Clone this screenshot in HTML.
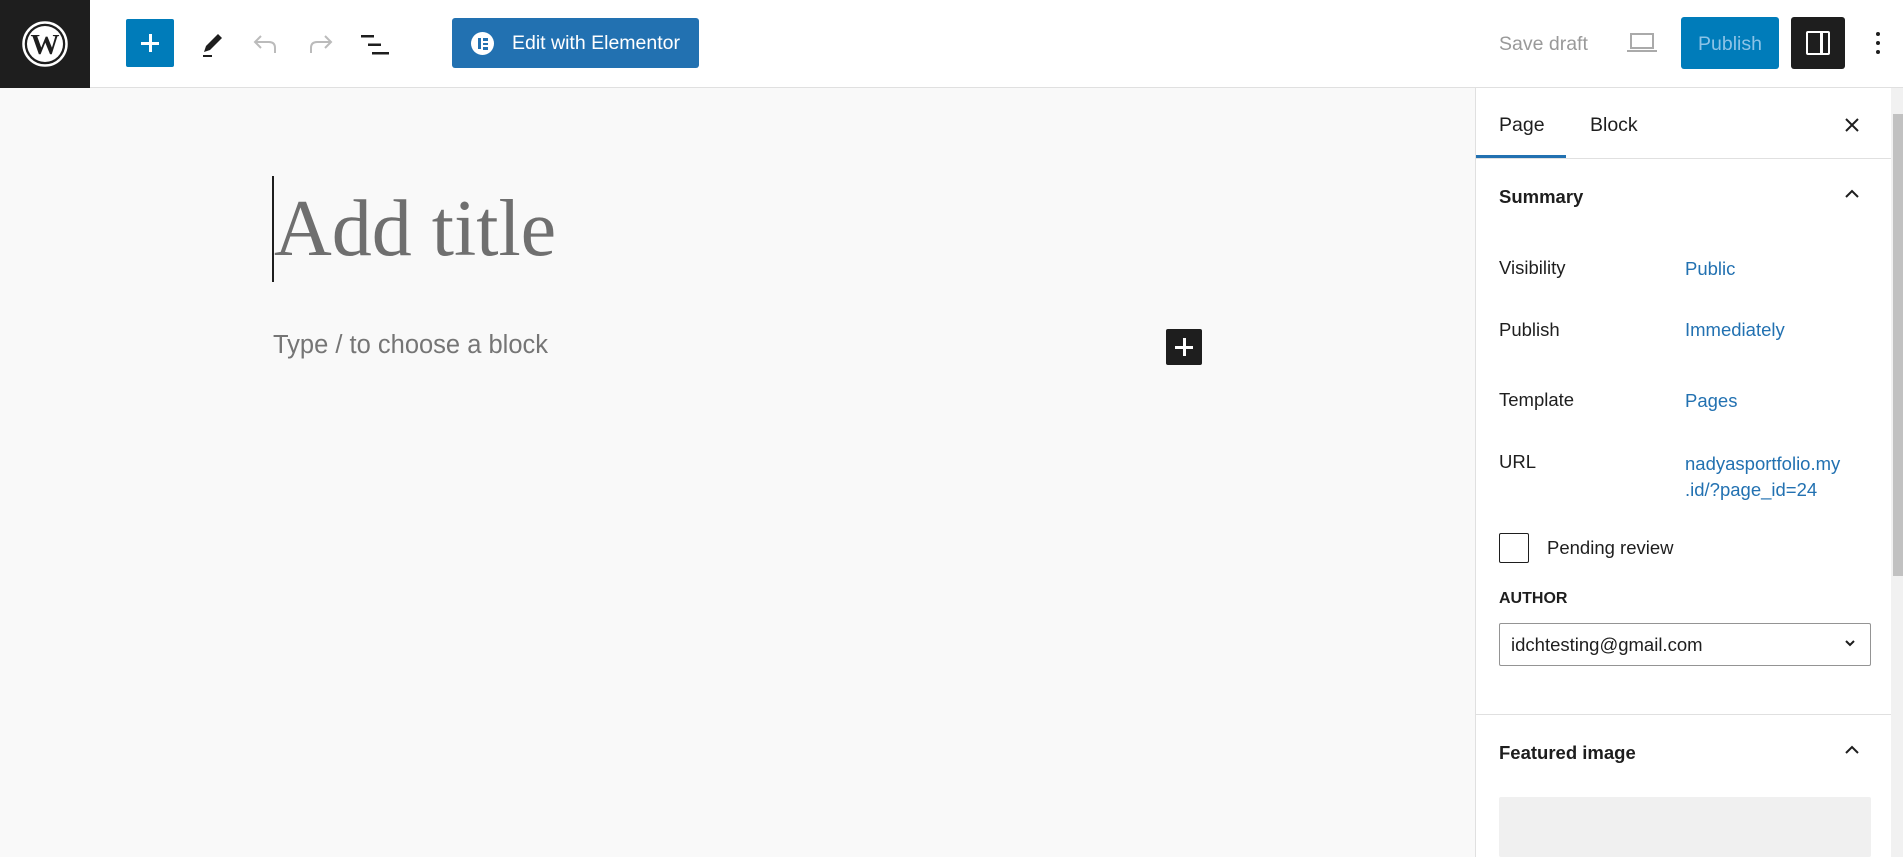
<!DOCTYPE html>
<html><head><meta charset="utf-8"><style>
*{box-sizing:border-box;margin:0;padding:0}
body{width:1903px;height:857px;overflow:hidden;background:#f9f9f9;font-family:"Liberation Sans",sans-serif;color:#1e1e1e;position:relative}
.a{position:absolute}
.hdr{left:0;top:0;width:1903px;height:88px;background:#fff;border-bottom:1px solid #e0e0e0}
.side{left:1475px;top:88px;width:428px;height:769px;background:#fff;border-left:1px solid #e0e0e0}
.t{font-size:18.5px;white-space:nowrap}
.lnk{color:#2271b1}
</style></head><body>
<div class="a hdr"></div>
<div class="a" style="left:0;top:0;width:90px;height:88px;background:#1e1e1e"></div>
<svg class="a" style="left:22px;top:21px" width="46" height="46" viewBox="0 0 46 46"><circle cx="23" cy="23" r="21.5" fill="none" stroke="#fff" stroke-width="2.5"/><circle cx="23" cy="23" r="18" fill="#fff"/><text x="23" y="33" text-anchor="middle" font-family="Liberation Serif" font-weight="bold" font-size="29" fill="#1e1e1e">W</text></svg>
<div class="a" style="left:126px;top:19px;width:48px;height:48px;background:#007cba;border-radius:2px"></div>
<div class="a" style="left:141px;top:42px;width:18px;height:2.5px;background:#fff"></div>
<div class="a" style="left:149px;top:34px;width:2.5px;height:18px;background:#fff"></div>
<svg class="a" style="left:200px;top:30px" width="26" height="30" viewBox="0 0 26 30"><path d="M4 22 L6 16 L18 4 L22 8 L10 20 Z" fill="#1e1e1e"/><rect x="3" y="25" width="9" height="2" fill="#1e1e1e"/></svg>
<svg class="a" style="left:252px;top:32px" width="28" height="24" viewBox="0 0 28 24"><path d="M9 4 L3 10 L9 16 M3 10 H17 Q23 10 23 16 V21" fill="none" stroke="#bbb" stroke-width="2"/></svg>
<svg class="a" style="left:306px;top:32px" width="28" height="24" viewBox="0 0 28 24"><path d="M19 4 L25 10 L19 16 M25 10 H11 Q5 10 5 16 V21" fill="none" stroke="#bbb" stroke-width="2"/></svg>
<svg class="a" style="left:360px;top:34px" width="30" height="22" viewBox="0 0 30 22"><rect x="1" y="1" width="13" height="2.5" fill="#1e1e1e"/><rect x="8" y="9.5" width="13" height="2.5" fill="#1e1e1e"/><rect x="12" y="18" width="17" height="2.5" fill="#1e1e1e"/></svg>
<div class="a" style="left:452px;top:18px;width:247px;height:50px;background:#2271b1;border-radius:3px"></div>
<div class="a" style="left:471px;top:32px;width:23px;height:23px;border-radius:50%;background:#fff"></div>
<div class="a" style="left:478px;top:38px;width:2.5px;height:11px;background:#2271b1"></div>
<div class="a" style="left:483px;top:38px;width:5px;height:2.5px;background:#2271b1"></div>
<div class="a" style="left:483px;top:42.5px;width:5px;height:2.5px;background:#2271b1"></div>
<div class="a" style="left:483px;top:47px;width:5px;height:2.5px;background:#2271b1"></div>
<div class="a t" style="left:512px;top:32px;color:#fff;font-size:19.5px">Edit with Elementor</div>
<div class="a t" style="left:1499px;top:33px;color:#999;font-size:19.5px">Save draft</div>
<svg class="a" style="left:1626px;top:32px" width="32" height="22" viewBox="0 0 32 22"><rect x="5" y="2" width="22" height="14" fill="none" stroke="#aaa" stroke-width="2"/><rect x="1" y="18" width="30" height="2" fill="#aaa"/></svg>
<div class="a" style="left:1681px;top:17px;width:98px;height:52px;background:#007cba;border-radius:3px"></div>
<div class="a t" style="left:1698px;top:33px;color:#8cc3e6;font-size:19.5px">Publish</div>
<div class="a" style="left:1791px;top:17px;width:54px;height:52px;background:#1e1e1e;border-radius:3px"></div>
<div class="a" style="left:1806px;top:31px;width:24px;height:24px;border:2px solid #fff;border-radius:2px"></div>
<div class="a" style="left:1820px;top:31px;width:2.5px;height:24px;background:#fff"></div>
<div class="a" style="left:1876px;top:32px;width:4px;height:4px;background:#1e1e1e;border-radius:50%"></div>
<div class="a" style="left:1876px;top:41px;width:4px;height:4px;background:#1e1e1e;border-radius:50%"></div>
<div class="a" style="left:1876px;top:50px;width:4px;height:4px;background:#1e1e1e;border-radius:50%"></div>

<div class="a" style="left:272px;top:176px;width:2px;height:106px;background:#1e1e1e"></div>
<div class="a" style="left:274px;top:176px;font-family:'Liberation Serif',serif;font-size:80px;color:#6f6f6f;line-height:106px;white-space:nowrap">Add title</div>
<div class="a" style="left:273px;top:331px;font-size:25.5px;color:#757575;white-space:nowrap">Type / to choose a block</div>
<div class="a" style="left:1166px;top:329px;width:36px;height:36px;background:#1e1e1e;border-radius:2px"></div>
<div class="a" style="left:1175px;top:346px;width:18px;height:2.5px;background:#fff"></div>
<div class="a" style="left:1183px;top:338px;width:2.5px;height:18px;background:#fff"></div>

<div class="a side"></div>
<div class="a" style="left:1891px;top:88px;width:12px;height:769px;background:#f1f1f1"></div>
<div class="a" style="left:1893px;top:114px;width:10px;height:462px;background:#c1c1c1"></div>
<div class="a" style="left:1476px;top:158px;width:415px;height:1px;background:#e0e0e0"></div>
<div class="a" style="left:1476px;top:155px;width:90px;height:3px;background:#2271b1"></div>
<div class="a t" style="left:1499px;top:114px;font-size:19.5px">Page</div>
<div class="a t" style="left:1590px;top:114px;font-size:19.5px">Block</div>
<svg class="a" style="left:1843px;top:116px" width="18" height="18" viewBox="0 0 18 18"><path d="M3 3 L15 15 M15 3 L3 15" stroke="#1e1e1e" stroke-width="2"/></svg>
<div class="a t" style="left:1499px;top:186px;font-weight:bold;font-size:18.5px">Summary</div>
<svg class="a" style="left:1843px;top:188px" width="18" height="12" viewBox="0 0 18 12"><path d="M3 9 L9 3 L15 9" fill="none" stroke="#1e1e1e" stroke-width="2"/></svg>
<div class="a t" style="left:1499px;top:257px">Visibility</div><div class="a t lnk" style="left:1685px;top:258px">Public</div>
<div class="a t" style="left:1499px;top:319px">Publish</div><div class="a t lnk" style="left:1685px;top:319px">Immediately</div>
<div class="a t" style="left:1499px;top:389px">Template</div><div class="a t lnk" style="left:1685px;top:390px">Pages</div>
<div class="a t" style="left:1499px;top:451px">URL</div>
<div class="a t lnk" style="left:1685px;top:451px;line-height:26px">nadyasportfolio.my<br>.id/?page_id=24</div>
<div class="a" style="left:1499px;top:533px;width:30px;height:30px;border:1.5px solid #1e1e1e;border-radius:2px"></div>
<div class="a t" style="left:1547px;top:537px">Pending review</div>
<div class="a t" style="left:1499px;top:590px;font-size:16px;font-weight:bold">AUTHOR</div>
<div class="a" style="left:1499px;top:623px;width:372px;height:43px;border:1px solid #949494;border-radius:2px"></div>
<div class="a t" style="left:1511px;top:634px">idchtesting@gmail.com</div>
<svg class="a" style="left:1843px;top:638px" width="14" height="10" viewBox="0 0 14 10"><path d="M3 3 L7 7 L11 3" fill="none" stroke="#1e1e1e" stroke-width="2"/></svg>
<div class="a" style="left:1476px;top:714px;width:415px;height:1px;background:#e0e0e0"></div>
<div class="a t" style="left:1499px;top:742px;font-weight:bold">Featured image</div>
<svg class="a" style="left:1843px;top:744px" width="18" height="12" viewBox="0 0 18 12"><path d="M3 9 L9 3 L15 9" fill="none" stroke="#1e1e1e" stroke-width="2"/></svg>
<div class="a" style="left:1499px;top:797px;width:372px;height:60px;background:#f0f0f0;border-radius:2px"></div>
</body></html>
